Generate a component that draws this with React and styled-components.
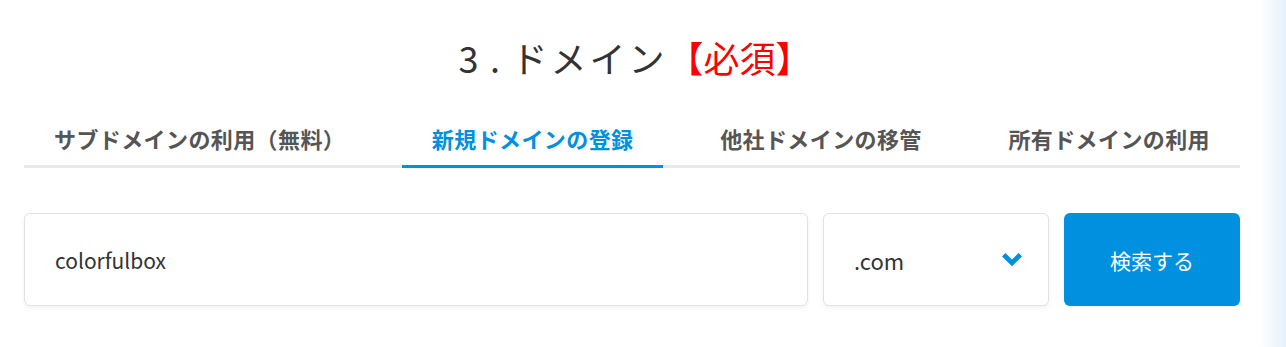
import styled, { createGlobalStyle } from "styled-components";

const GlobalStyle = createGlobalStyle`
  html, body {
    margin: 0;
    padding: 0;
  }
  body {
    min-height: 347px;
    font-family: "Noto Sans CJK JP", "Noto Sans", sans-serif;
    background: linear-gradient(90deg, #fff 0, #fff 1260px, #e4f1fb 1286px);
  }
`;

const Section = styled.section`
  box-sizing: border-box;
  width: 1216px;
  margin-left: 24px;
  padding-top: 32px;
`;

const Title = styled.h2`
  margin: 0;
  padding-left: 6px;
  text-align: center;
  font-size: 36px;
  line-height: 50px;
  font-weight: 400;
  color: #333;
`;

const Num = styled.span`
  letter-spacing: 11.5px;
`;

const Label = styled.span`
  letter-spacing: 3px;
`;

const Required = styled.span`
  color: #f00;
`;

const TabList = styled.div`
  display: flex;
  justify-content: space-between;
  margin-top: 33px;
  border-bottom: 3px solid #e9e9e9;
`;

const Tab = styled.div`
  padding: 8px 30px 12px;
  margin-bottom: -3px;
  font-size: 22px;
  line-height: 30px;
  font-weight: 700;
  letter-spacing: 0.4px;
  color: ${(props) => (props.active ? "#0090e0" : "#555")};
  border-bottom: 3px solid ${(props) => (props.active ? "#0090e0" : "transparent")};
  cursor: pointer;
`;

const SearchRow = styled.div`
  display: flex;
  gap: 15px;
  margin-top: 45px;
  height: 93px;
`;

const Field = styled.div`
  box-sizing: border-box;
  display: flex;
  align-items: center;
  justify-content: space-between;
  flex: ${(props) => props.grow || "none"};
  width: ${(props) => props.width || "auto"};
  padding: 0 26px 0 30px;
  background: #fff;
  border: 1px solid #e2e2e2;
  border-radius: 6px;
  box-shadow: 0 2px 4px rgba(0, 0, 0, 0.05);
  font-size: ${(props) => props.size || "22px"};
  color: #333;
`;

const Chevron = styled.svg`
  width: 20px;
  height: 13px;
  fill: #0090e0;
`;

const Button = styled.button`
  width: 176px;
  border: none;
  border-radius: 6px;
  background: #0090e0;
  color: #fff;
  font-family: "Noto Sans CJK JP", "Noto Sans", sans-serif;
  font-size: 21px;
  cursor: pointer;
`;

const tabs = ["サブドメインの利用（無料）", "新規ドメインの登録", "他社ドメインの移管", "所有ドメインの利用"];

export default function App() {
  return (
    <>
      <GlobalStyle />
      <Section>
        <Title>
          <Num>3.</Num>
          <Label>ドメイン</Label>
          <Required>【必須】</Required>
        </Title>
        <TabList>
          {tabs.map((t, i) => (
            <Tab key={t} active={i === 1}>
              {t}
            </Tab>
          ))}
        </TabList>
        <SearchRow>
          <Field grow="1" size="21px">colorfulbox</Field>
          <Field width="226px">
            .com
            <Chevron viewBox="0 0 20 13">
              <polygon points="0,3.4 3.4,0 10,6.6 16.6,0 20,3.4 10,13.2" />
            </Chevron>
          </Field>
          <Button>検索する</Button>
        </SearchRow>
      </Section>
    </>
  );
}
